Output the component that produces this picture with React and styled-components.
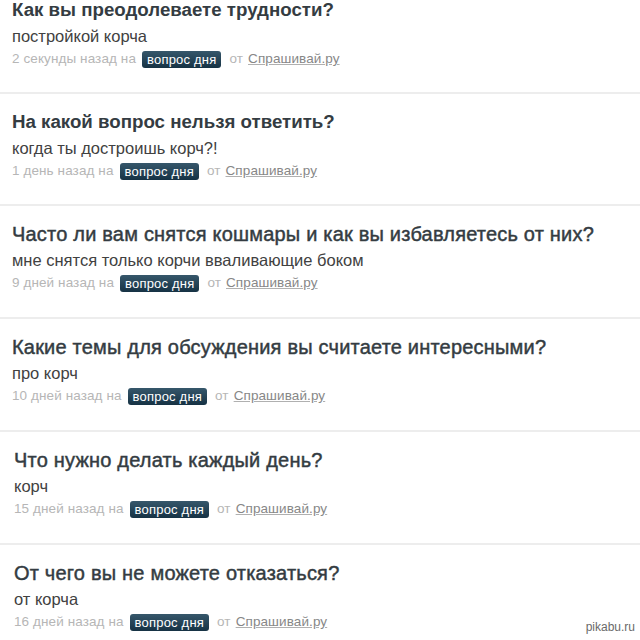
import React from 'react';
import styled, { createGlobalStyle } from 'styled-components';

const questions = [
    { id: 1, title: 'Как вы преодолеваете трудности?', answer: 'постройкой корча', time: '2 секунды назад', bold: true },
    { id: 2, title: 'На какой вопрос нельзя ответить?', answer: 'когда ты достроишь корч?!', time: '1 день назад', bold: true },
    { id: 3, title: 'Часто ли вам снятся кошмары и как вы избавляетесь от них?', answer: 'мне снятся только корчи вваливающие боком', time: '9 дней назад' },
    { id: 4, title: 'Какие темы для обсуждения вы считаете интересными?', answer: 'про корч', time: '10 дней назад' },
    { id: 5, title: 'Что нужно делать каждый день?', answer: 'корч', time: '15 дней назад', shift: true },
    { id: 6, title: 'От чего вы не можете отказаться?', answer: 'от корча', time: '16 дней назад', shift: true },
];

const GlobalStyle = createGlobalStyle`
    html, body {
        margin: 0;
        padding: 0;
        background: #ffffff;
        overflow: hidden;
    }
    body {
        font-family: "Liberation Sans", Arial, sans-serif;
    }
`

function App() {
    return (
        <Page>
            <GlobalStyle />
            <QuestionList>
                {questions.map(q => (
                    <QuestionItem key={q.id} shift={q.shift} bold={q.bold}>
                        <Title bold={q.bold}>{q.title}</Title>
                        <Answer>{q.answer}</Answer>
                        <Meta>
                            <span>{q.time} на</span>
                            <Badge>вопрос дня</Badge>
                            <From>от</From>
                            <SourceLink href="#">Спрашивай.ру</SourceLink>
                        </Meta>
                    </QuestionItem>
                ))}
            </QuestionList>
            <Watermark>pikabu.ru</Watermark>
        </Page>
    );
}

const Page = styled.div`
    position: relative;
    width: 640px;
    height: 640px;
    overflow: hidden;
    background: #ffffff;
`

const QuestionList = styled.ul`
    list-style: none;
    margin: -18px 0 0;
    padding: 0;
`

const QuestionItem = styled.li`
    padding: 16px 12px ${props => props.bold ? '24px' : '25px'} ${props => props.shift ? '14px' : '12px'};
    border-bottom: 2px solid #ededed;
`

const Title = styled.h3`
    margin: 0;
    font-size: ${props => props.bold ? '18.7px' : '20px'};
    line-height: 24px;
    font-weight: ${props => props.bold ? 'bold' : 'normal'};
    letter-spacing: ${props => props.bold ? '0' : '0.2px'};
    color: #343c42;
    -webkit-text-stroke: ${props => props.bold ? '0' : '0.45px #343c42'};
`

const Answer = styled.div`
    margin-top: 3px;
    font-size: 16.5px;
    line-height: 22px;
    color: #414141;
`

const Meta = styled.div`
    margin-top: 3px;
    display: flex;
    align-items: center;
    font-size: 13.5px;
    line-height: 18px;
    letter-spacing: 0.1px;
    color: #b6b6b6;
`

const Badge = styled.span`
    display: inline-block;
    margin-left: 6px;
    padding: 0 5px;
    height: 17px;
    line-height: 17px;
    border-radius: 3px;
    background: linear-gradient(#36576b, #163244);
    color: #ffffff;
    font-size: 13px;
    letter-spacing: 0.2px;
`

const From = styled.span`
    margin-left: 8px;
`

const SourceLink = styled.a`
    margin-left: 5px;
    color: #878787;
    text-decoration: underline;
    text-decoration-color: #b0b0b0;
`

const Watermark = styled.div`
    position: absolute;
    right: 5px;
    bottom: 6px;
    font-size: 12px;
    color: #6a6a6a;
    text-shadow: 0 0 2px #ffffff;
`

export default App;
